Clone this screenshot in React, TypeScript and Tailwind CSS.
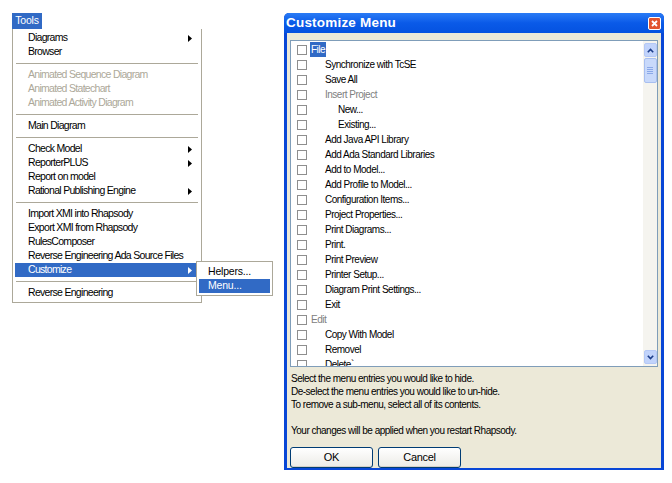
import React from 'react'

type MenuItem =
  | { kind: 'sep' }
  | { kind: 'item'; label: string; disabled?: boolean; sub?: boolean; active?: boolean }

const menu: MenuItem[] = [
  { kind: 'item', label: 'Diagrams', sub: true },
  { kind: 'item', label: 'Browser' },
  { kind: 'sep' },
  { kind: 'item', label: 'Animated Sequence Diagram', disabled: true },
  { kind: 'item', label: 'Animated Statechart', disabled: true },
  { kind: 'item', label: 'Animated Activity Diagram', disabled: true },
  { kind: 'sep' },
  { kind: 'item', label: 'Main Diagram' },
  { kind: 'sep' },
  { kind: 'item', label: 'Check Model', sub: true },
  { kind: 'item', label: 'ReporterPLUS', sub: true },
  { kind: 'item', label: 'Report on model' },
  { kind: 'item', label: 'Rational Publishing Engine', sub: true },
  { kind: 'sep' },
  { kind: 'item', label: 'Import XMI into Rhapsody' },
  { kind: 'item', label: 'Export XMI from Rhapsody' },
  { kind: 'item', label: 'RulesComposer' },
  { kind: 'item', label: 'Reverse Engineering Ada Source Files' },
  { kind: 'item', label: 'Customize', sub: true, active: true },
  { kind: 'sep' },
  { kind: 'item', label: 'Reverse Engineering' },
]

// level 0 = top menu, 1 = entry, 2 = sub entry
const entries: { label: string; level: number; grey?: boolean; selected?: boolean }[] = [
  { label: 'File', level: 0, selected: true },
  { label: 'Synchronize with TcSE', level: 1 },
  { label: 'Save All', level: 1 },
  { label: 'Insert Project', level: 1, grey: true },
  { label: 'New...', level: 2 },
  { label: 'Existing...', level: 2 },
  { label: 'Add Java API Library', level: 1 },
  { label: 'Add Ada Standard Libraries', level: 1 },
  { label: 'Add to Model...', level: 1 },
  { label: 'Add Profile to Model...', level: 1 },
  { label: 'Configuration Items...', level: 1 },
  { label: 'Project Properties...', level: 1 },
  { label: 'Print Diagrams...', level: 1 },
  { label: 'Print.', level: 1 },
  { label: 'Print Preview', level: 1 },
  { label: 'Printer Setup...', level: 1 },
  { label: 'Diagram Print Settings...', level: 1 },
  { label: 'Exit', level: 1 },
  { label: 'Edit', level: 0, grey: true },
  { label: 'Copy With Model', level: 1 },
  { label: 'Removel', level: 1 },
  { label: 'Delete`', level: 1 },
]

const Arrow = () => (
  <svg width="4" height="7" viewBox="0 0 4 7" className="shrink-0">
    <path d="M0 0 L4 3.5 L0 7 Z" fill="currentColor" />
  </svg>
)

function ToolsMenu() {
  return (
    <div className="relative pl-[12px] pt-[13px] font-['Liberation_Sans',Arial,sans-serif] text-[10.5px] tracking-[-0.7px]">
      <div className="w-[30px] h-[16px] bg-[#316ac5] text-white flex items-center justify-center tracking-[-0.2px]">Tools</div>
      <div className="w-[190px] bg-white border border-[#aca899] border-t-0 p-[2px]">
        {menu.map((m, i) =>
          m.kind === 'sep' ? (
            <div key={i} className="h-[9px] flex items-center px-[1px]">
              <div className="w-full h-px bg-[#aca899]" />
            </div>
          ) : (
            <div
              key={i}
              className={`relative h-[14px] flex items-center pl-[13px] pr-[7px] ${
                m.active ? 'bg-[#316ac5] text-white' : m.disabled ? 'text-[#aca899]' : 'text-black'
              }`}
            >
              <span className="flex-1 whitespace-nowrap">{m.label}</span>
              {m.sub && <Arrow />}
              {m.active && (
                <div className="absolute left-[181px] top-[-2px] w-[77px] bg-white border border-[#aca899] p-[2px] text-black z-10 tracking-[-0.2px]">
                  <div className="h-[15px] flex items-center pl-[9px]">Helpers...</div>
                  <div className="h-[14px] flex items-center pl-[9px] bg-[#316ac5] text-white">Menu...</div>
                </div>
              )}
            </div>
          )
        )}
      </div>
    </div>
  )
}

function Checkbox() {
  return <div className="w-[10px] h-[10px] border border-[#8e8e8e] bg-white shrink-0" />
}

function ScrollBar() {
  return (
    <div className="w-[14px] h-full bg-[#f5f4ef] flex flex-col items-center py-[2px] gap-[1px]">
      <div className="w-[13px] h-[14px] rounded-[2px] bg-[#c1d3fb] border border-[#b4c8f6] flex items-center justify-center">
        <svg width="7" height="5" viewBox="0 0 7 5">
          <path d="M0.8 4.2 L3.5 1.4 L6.2 4.2" stroke="#1c3d8a" strokeWidth="1.6" fill="none" />
        </svg>
      </div>
      <div className="w-[13px] h-[25px] rounded-[2px] bg-[#c8d9fb] border border-[#a8bff0] flex flex-col items-center justify-center gap-[1px]">
        <div className="w-[6px] h-px bg-[#8aa8e8]" />
        <div className="w-[6px] h-px bg-[#8aa8e8]" />
        <div className="w-[6px] h-px bg-[#8aa8e8]" />
        <div className="w-[6px] h-px bg-[#8aa8e8]" />
      </div>
      <div className="flex-1" />
      <div className="w-[13px] h-[14px] rounded-[2px] bg-[#c1d3fb] border border-[#b4c8f6] flex items-center justify-center">
        <svg width="7" height="5" viewBox="0 0 7 5">
          <path d="M0.8 0.8 L3.5 3.6 L6.2 0.8" stroke="#1c3d8a" strokeWidth="1.6" fill="none" />
        </svg>
      </div>
    </div>
  )
}

function XPButton({ label }: { label: string }) {
  return (
    <div className="w-[83px] h-[21px] rounded-[3px] border border-[#003c74] bg-gradient-to-b from-white to-[#ecebe6] shadow-[inset_0_-1px_0_#d6d0c5] flex items-center justify-center text-black text-[11px] tracking-[-0.3px]">
      {label}
    </div>
  )
}

function CustomizeDialog() {
  return (
    <div className="mt-[13px] ml-[82px] w-[380px] h-[457px] rounded-t-[5px] bg-[#0846d6] flex flex-col font-['Liberation_Sans',Arial,sans-serif]">
      <div className="h-[20px] rounded-t-[5px] bg-gradient-to-b from-[#2a7bf5] via-[#0a5ae8] to-[#0552e0] flex items-center pl-[2px] pr-[3px]">
        <span className="flex-1 text-white font-bold text-[13.5px] tracking-[0.2px]">Customize Menu</span>
        <div className="w-[13px] h-[13px] rounded-[2px] border border-white bg-[#e2542d] flex items-center justify-center">
          <svg width="7" height="7" viewBox="0 0 7 7">
            <path d="M1 1 L6 6 M6 1 L1 6" stroke="white" strokeWidth="1.8" />
          </svg>
        </div>
      </div>
      <div className="flex-1 mx-[3px] mb-[3px] bg-[#ece9d8] flex flex-col px-[3px] pt-[7px] text-[10px] tracking-[-0.5px]">
        <div className="h-[327px] border border-[#7f9db9] bg-white flex">
          <div className="flex-1 overflow-hidden pt-[1px]">
            {entries.map((e, i) => (
              <div key={i} className="h-[15px] flex items-center pl-[6px]">
                <Checkbox />
                <span
                  className={`whitespace-nowrap ${
                    e.level === 0 ? 'ml-[3px] px-[1px]' : e.level === 1 ? 'ml-[18px]' : 'ml-[31px]'
                  } ${e.selected ? 'bg-[#316ac5] text-white' : e.grey ? 'text-[#808080]' : 'text-black'}`}
                >
                  {e.label}
                </span>
              </div>
            ))}
          </div>
          <ScrollBar />
        </div>
        <div className="mt-[5px] leading-[13px] text-black pl-[1px]">
          <div>Select the menu entries you would like to hide.</div>
          <div>De-select the menu entries you would like to un-hide.</div>
          <div>To remove a sub-menu, select all of its contents.</div>
          <div className="h-[13px]" />
          <div>Your changes will be applied when you restart Rhapsody.</div>
        </div>
        <div className="mt-[10px] flex gap-[5px]">
          <XPButton label="OK" />
          <XPButton label="Cancel" />
        </div>
      </div>
    </div>
  )
}

export default function App() {
  return (
    <div className="w-[672px] h-[483px] bg-white flex items-start overflow-hidden">
      <ToolsMenu />
      <CustomizeDialog />
    </div>
  )
}
